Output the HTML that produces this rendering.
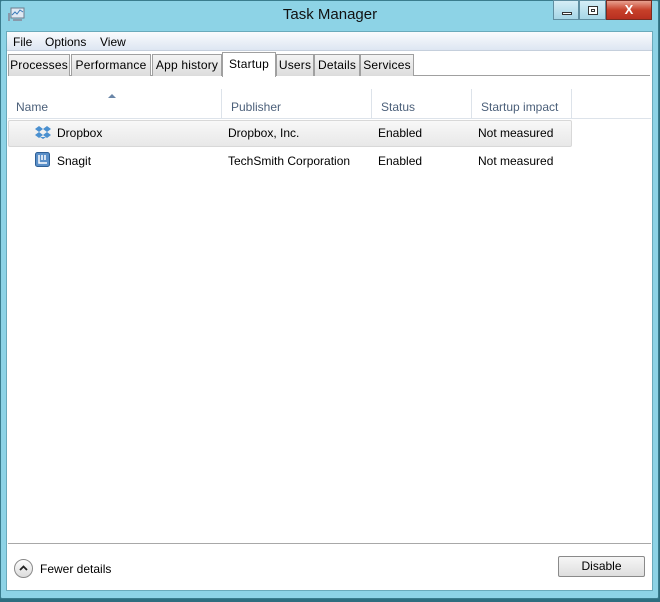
<!DOCTYPE html>
<html><head><style>
*{margin:0;padding:0;box-sizing:border-box}
body{width:660px;height:602px;overflow:hidden;background:#2d6e80;font-family:"Liberation Sans",sans-serif;font-size:12px;color:#000;position:relative}
.frame{position:absolute;left:0;top:0;width:659px;height:599px;background:#8dd3e6;border:1px solid #3a7d8e;border-radius:2px}
.abs{position:absolute}
.client{position:absolute;left:6px;top:31px;width:647px;height:560px;background:#fff;border:1px solid #6aaabb}
.tab{position:absolute;top:22px;height:22px;border:1px solid #a0a0a0;border-bottom:none;background:linear-gradient(#f4f4f4,#dcdcdc);font-size:12px;text-align:center;line-height:21px;letter-spacing:0.2px;padding:0}
.hd{position:absolute;top:68px;color:#4c607a;font-size:12px}
.vl{position:absolute;top:57px;width:1px;height:30px;background:#dde3ea}
.cell{position:absolute;font-size:12px}
</style></head><body>
<div class="frame"></div>
<svg class="abs" style="left:8px;top:7px" width="18" height="16"><rect x="3" y="1" width="13" height="10" fill="#dfe9f3" stroke="#6c7c8c"/><polyline points="4,8 7,5 9,7 12,3 15,5" fill="none" stroke="#3a7ab8"/><rect x="0" y="6" width="2" height="8" fill="#8899aa"/><rect x="5" y="12" width="9" height="2" fill="#8899aa"/></svg>
<div class="abs" style="left:0;width:660px;top:6px;text-align:center;font-size:15px;color:#111">Task Manager</div>
<div class="abs" style="left:553px;top:0;width:26px;height:20px;border:1px solid #5f8ea0;background:linear-gradient(#d5eef6,#a6d6e6)"><div class="abs" style="left:8px;top:11px;width:10px;height:3px;border:1px solid #333;background:#fff"></div></div>
<div class="abs" style="left:579px;top:0;width:27px;height:20px;border:1px solid #5f8ea0;background:linear-gradient(#d5eef6,#a6d6e6)"><div class="abs" style="left:8px;top:5px;width:10px;height:9px;border:1px solid #333;background:#fff"><div class="abs" style="left:2px;top:2px;width:4px;height:3px;border:1px solid #333"></div></div></div>
<div class="abs" style="left:606px;top:0;width:46px;height:20px;border:1px solid #7a2b20;background:linear-gradient(#e8a08f,#c7402a 50%,#b83020);color:#fff;font-weight:bold;font-size:13px;text-align:center;line-height:18px">X</div>
<div class="client">
 <div class="abs" style="left:0;top:0;width:645px;height:19px;background:linear-gradient(#fafbfd,#dde6f2);border-bottom:1px solid #c5cfdc"></div>
 <div class="abs" style="left:6px;top:3px">File</div>
 <div class="abs" style="left:38px;top:3px">Options</div>
 <div class="abs" style="left:93px;top:3px">View</div>
 <div class="abs" style="left:1px;top:43px;width:642px;height:1px;background:#a0a0a0"></div>
 <div class="tab" style="left:1px;width:62px">Processes</div>
 <div class="tab" style="left:64px;width:80px">Performance</div>
 <div class="tab" style="left:145px;width:70px">App history</div>
 <div class="tab" style="left:215px;width:54px;top:20px;height:25px;background:#fff;line-height:22px">Startup</div>
 <div class="tab" style="left:269px;width:38px">Users</div>
 <div class="tab" style="left:307px;width:46px">Details</div>
 <div class="tab" style="left:353px;width:54px">Services</div>
 <svg class="abs" style="left:101px;top:62px" width="8" height="5"><path d="M0 4L4 0L8 4Z" fill="#6a86a8"/></svg>
 <div class="hd" style="left:9px">Name</div>
 <div class="hd" style="left:224px">Publisher</div>
 <div class="hd" style="left:374px">Status</div>
 <div class="hd" style="left:474px">Startup impact</div>
 <div class="vl" style="left:214px"></div><div class="vl" style="left:364px"></div><div class="vl" style="left:464px"></div><div class="vl" style="left:564px"></div>
 <div class="abs" style="left:1px;top:86px;width:643px;height:1px;background:#dde3ea"></div>
 <div class="abs" style="left:1px;top:88px;width:564px;height:27px;background:linear-gradient(#f8f8f8,#e8e8e8);border:1px solid #d8d8d8;border-radius:2px"></div>
 <svg class="abs" style="left:28px;top:93px" width="16" height="15"><path d="M4 1L8 4L4 7L0 4Z M12 1L16 4L12 7L8 4Z M4 7L8 10L4 13L0 10Z M12 7L16 10L12 13L8 10Z" fill="#4a90d0"/><path d="M5 12L8 14L11 12" fill="#4a90d0"/></svg>
 <div class="cell" style="left:50px;top:94px">Dropbox</div>
 <div class="cell" style="left:221px;top:94px">Dropbox, Inc.</div>
 <div class="cell" style="left:371px;top:94px">Enabled</div>
 <div class="cell" style="left:471px;top:94px">Not measured</div>
 <svg class="abs" style="left:28px;top:120px" width="15" height="15"><rect x="0.5" y="0.5" width="14" height="14" rx="2" fill="#5a8fc8" stroke="#2d5f96"/><path d="M4 3V11H12M7 3V8M10 3V8" stroke="#fff" stroke-width="1.5" fill="none"/></svg>
 <div class="cell" style="left:50px;top:122px">Snagit</div>
 <div class="cell" style="left:221px;top:122px">TechSmith Corporation</div>
 <div class="cell" style="left:371px;top:122px">Enabled</div>
 <div class="cell" style="left:471px;top:122px">Not measured</div>
 <div class="abs" style="left:1px;top:511px;width:643px;height:1px;background:#a8a8a8"></div>
 <div class="abs" style="left:7px;top:527px;width:19px;height:19px;border-radius:50%;border:1px solid #8a8a8a;background:linear-gradient(#fdfdfd,#dcdcdc)"><svg class="abs" style="left:4px;top:5px" width="9" height="6"><path d="M1 5L4.5 1.5L8 5" fill="none" stroke="#222" stroke-width="1.8"/></svg></div>
 <div class="abs" style="left:33px;top:530px">Fewer details</div>
 <div class="abs" style="left:551px;top:524px;width:87px;height:21px;border:1px solid #8a8a8a;border-radius:2px;background:linear-gradient(#f6f6f6,#dedede);text-align:center;line-height:19px">Disable</div>
</div>
</body></html>
